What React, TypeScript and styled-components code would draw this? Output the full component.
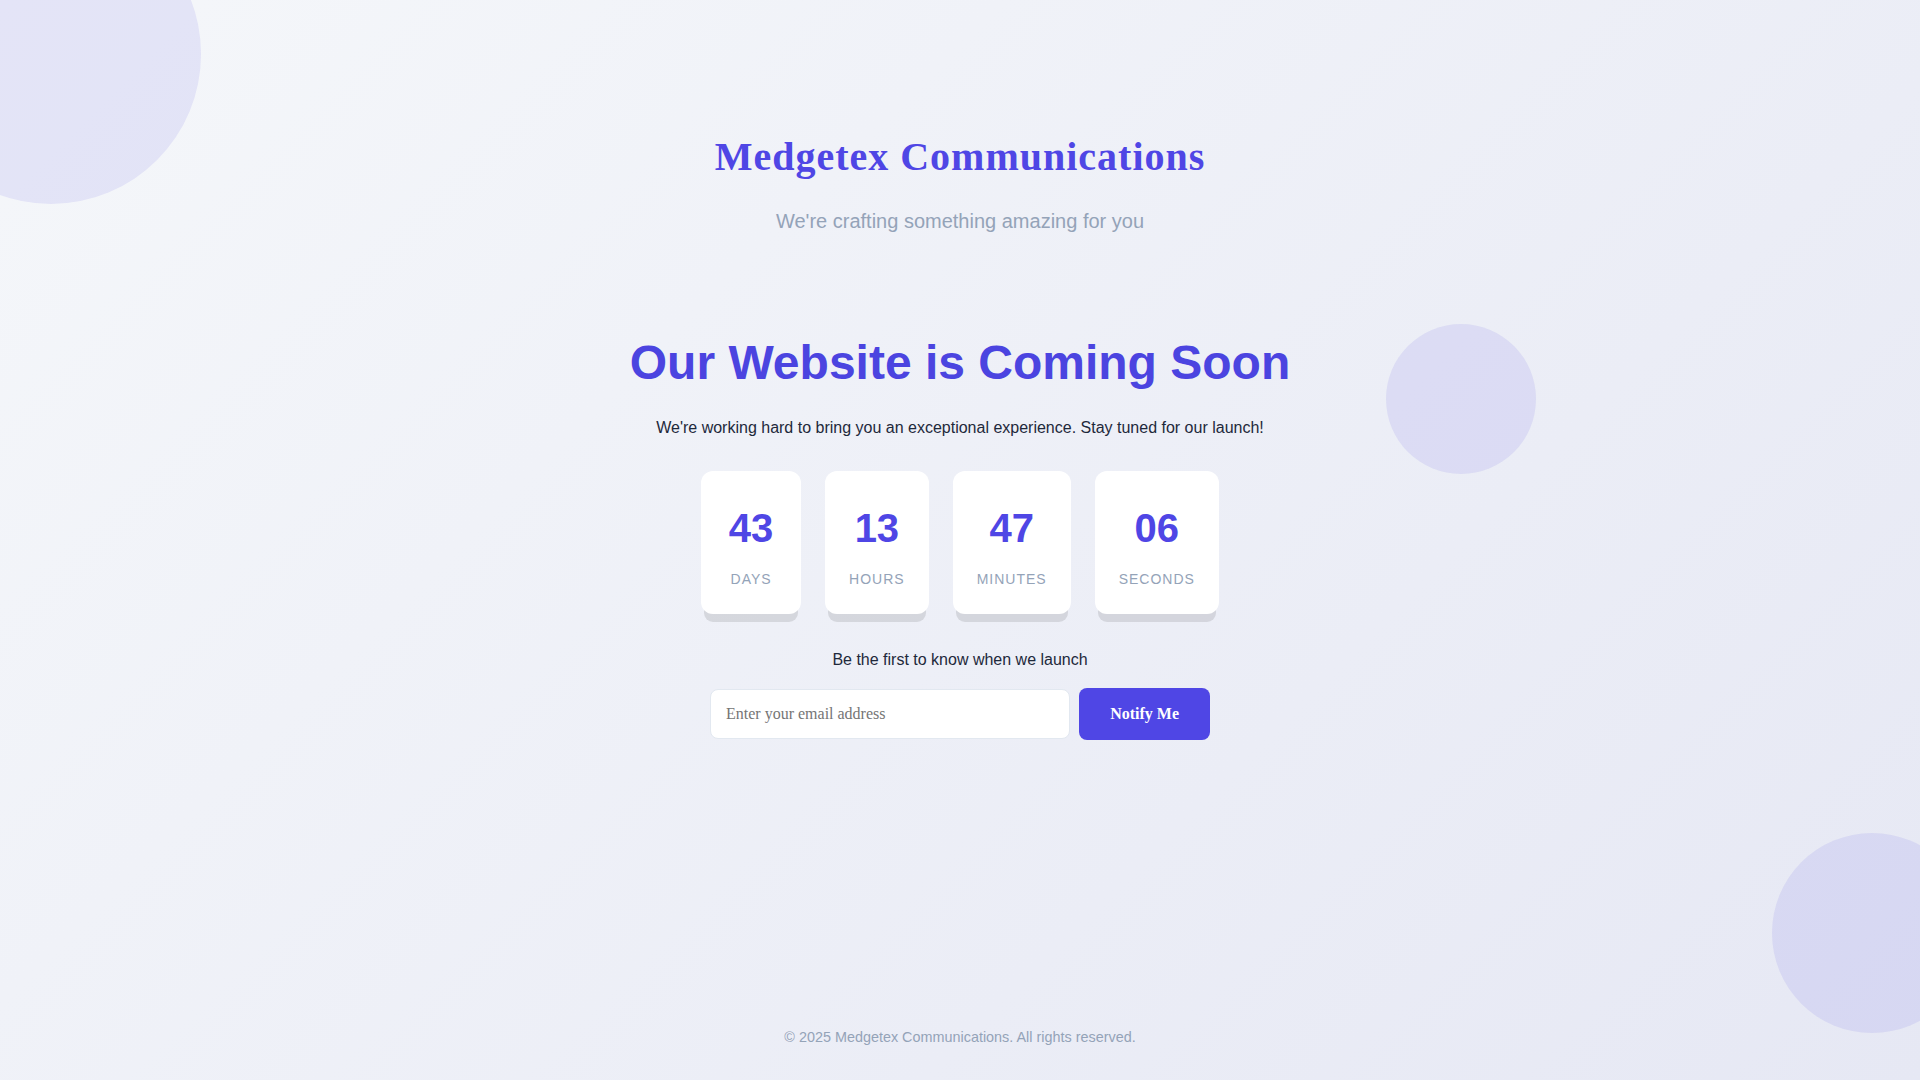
import React from 'react'
import styled, { createGlobalStyle } from 'styled-components'

const GlobalStyle = createGlobalStyle`
    * {
        box-sizing: border-box;
    }
    html, body {
        margin: 0;
        padding: 0;
    }
    body {
        font-family: 'Liberation Sans', Arial, sans-serif;
        color: #1e293b;
    }
`

const Page = styled.div`
    position: relative;
    min-height: 100vh;
    overflow: hidden;
    display: flex;
    flex-direction: column;
    align-items: center;
    background: linear-gradient(135deg, #f5f7fa 0%, #e6e8f4 100%);
`

const Circle = styled.div<{ size: number }>`
    position: absolute;
    width: ${props => props.size}px;
    height: ${props => props.size}px;
    border-radius: 50%;
    background: rgba(79, 70, 229, 0.1);
    pointer-events: none;
`

const TopLeftCircle = styled(Circle)`
    top: -96px;
    left: -99px;
`

const MiddleCircle = styled(Circle)`
    top: 324px;
    right: 384px;
`

const BottomCircle = styled(Circle)`
    bottom: 47px;
    right: -52px;
`

const Header = styled.header`
    display: flex;
    flex-direction: column;
    align-items: center;
    padding-top: 133px;
`

const Brand = styled.h1`
    margin: 0;
    font-family: 'Liberation Serif', 'Times New Roman', serif;
    font-weight: 700;
    font-size: 40px;
    line-height: 48px;
    letter-spacing: 1px;
    color: #4f46e5;
`

const Tagline = styled.p`
    margin: 28px 0 0;
    font-size: 20px;
    line-height: 24px;
    color: #94a3b8;
`

const Main = styled.main`
    display: flex;
    flex-direction: column;
    align-items: center;
    margin-top: 101px;
`

const Heading = styled.h2`
    margin: 0;
    font-size: 48px;
    line-height: 58px;
    font-weight: 700;
    color: #4b44e0;
`

const Lead = styled.p`
    margin: 26px 0 0;
    font-size: 16px;
    line-height: 20px;
    color: #1e293b;
`

const Countdown = styled.div`
    display: flex;
    gap: 24px;
    margin-top: 33px;
`

const TimeCard = styled.div`
    min-width: 100px;
    padding: 33px 24px 27px;
    display: flex;
    flex-direction: column;
    align-items: center;
    background: #ffffff;
    border-radius: 12px;
    box-shadow: 0 11px 0 -3px rgba(0, 0, 0, 0.1);
`

const TimeValue = styled.span`
    font-size: 40px;
    line-height: 48px;
    font-weight: 700;
    color: #4f46e5;
`

const TimeLabel = styled.span`
    margin-top: 19px;
    font-size: 14px;
    line-height: 16px;
    letter-spacing: 1px;
    text-transform: uppercase;
    color: #94a3b8;
`

const NotifyText = styled.p`
    margin: 36px 0 0;
    font-size: 16px;
    line-height: 20px;
    color: #1e293b;
`

const Form = styled.form`
    display: flex;
    align-items: center;
    gap: 9px;
    width: 500px;
    margin-top: 18px;
`

const EmailInput = styled.input`
    flex: 1;
    height: 50px;
    padding: 0 15px;
    border: 1px solid #e2e8f0;
    border-radius: 8px;
    background: #ffffff;
    font-family: 'Liberation Serif', 'Times New Roman', serif;
    font-size: 16px;
    color: #1e293b;
    outline: none;

    &::placeholder {
        color: #757575;
    }
`

const NotifyButton = styled.button`
    height: 52px;
    padding: 0 31px;
    border: 0;
    border-radius: 8px;
    background: #4f46e5;
    color: #ffffff;
    font-family: 'Liberation Serif', 'Times New Roman', serif;
    font-weight: 700;
    font-size: 16px;
    cursor: pointer;
`

const Footer = styled.footer`
    margin-top: auto;
    padding: 20px 0 34px;
    font-size: 14.4px;
    line-height: 18px;
    color: #94a3b8;
`

const countdown = [
    { value: '43', label: 'Days' },
    { value: '13', label: 'Hours' },
    { value: '47', label: 'Minutes' },
    { value: '06', label: 'Seconds' },
]

const App = () => {
    return (
        <>
            <GlobalStyle />
            <Page>
                <TopLeftCircle size={300} />
                <MiddleCircle size={150} />
                <BottomCircle size={200} />
                <Header>
                    <Brand>Medgetex Communications</Brand>
                    <Tagline>We're crafting something amazing for you</Tagline>
                </Header>
                <Main>
                    <Heading>Our Website is Coming Soon</Heading>
                    <Lead>We're working hard to bring you an exceptional experience. Stay tuned for our launch!</Lead>
                    <Countdown>
                        {countdown.map(item => (
                            <TimeCard key={item.label}>
                                <TimeValue>{item.value}</TimeValue>
                                <TimeLabel>{item.label}</TimeLabel>
                            </TimeCard>
                        ))}
                    </Countdown>
                    <NotifyText>Be the first to know when we launch</NotifyText>
                    <Form onSubmit={e => e.preventDefault()}>
                        <EmailInput type="email" placeholder="Enter your email address" />
                        <NotifyButton type="submit">Notify Me</NotifyButton>
                    </Form>
                </Main>
                <Footer>© 2025 Medgetex Communications. All rights reserved.</Footer>
            </Page>
        </>
    )
}

export default App
